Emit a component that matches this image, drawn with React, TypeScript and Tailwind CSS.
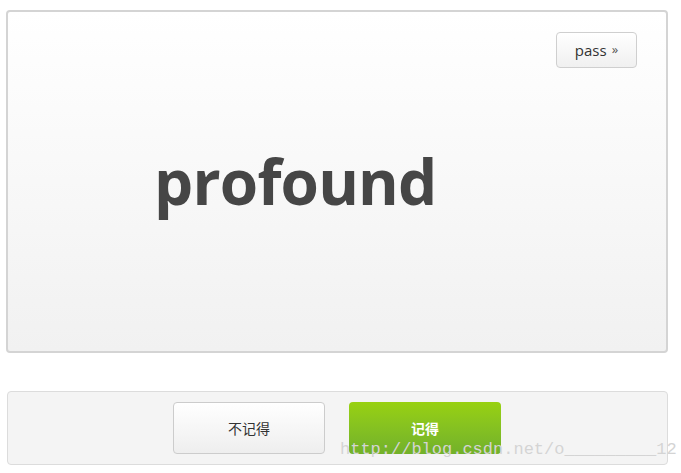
import React from 'react';

export default function App() {
  return (
    <div className="relative w-[681px] h-[473px] bg-white" style={{ fontFamily: '"Open Sans", "Noto Sans CJK SC", sans-serif' }}>
      <div className="pt-[10px] pl-[6px]">
        {/* word card */}
        <div className="w-[662px] h-[343px] rounded-[4px] border-2 border-[#d4d4d4] bg-gradient-to-b from-white to-[#f1f1f1] flex flex-col">
          <div className="flex justify-end pt-[20px] pr-[29px]">
            <button className="w-[81px] h-[36px] rounded-[4px] border border-[#cfcfcf] bg-gradient-to-b from-white to-[#f0f0f0] text-[15px] text-[#333] flex items-center justify-center gap-[5px]">
              pass <span className="text-[13px] text-[#555]">»</span>
            </button>
          </div>
          <div className="pl-[146px] pt-[82px]">
            <span className="text-[62px] font-bold text-[#464646] leading-none tracking-[-0.8px]">profound</span>
          </div>
        </div>

        {/* actions */}
        <div className="mt-[38px] ml-[1px] w-[661px] h-[74px] rounded-[4px] border border-[#dcdcdc] bg-[#f4f4f4] flex items-center pl-[165px] gap-[24px]">
          <button className="w-[152px] h-[52px] rounded-[4px] border border-[#cccccc] bg-gradient-to-b from-white to-[#eeeeee] text-[14px] text-[#333]">
            不记得
          </button>
          <button className="w-[152px] h-[52px] rounded-[4px] bg-gradient-to-b from-[#98d10f] to-[#72b12a] text-[14px] font-bold text-white">
            记得
          </button>
        </div>
      </div>

      {/* watermark */}
      <div
        className="absolute left-[340px] top-[441px] text-[17px] text-[#d4d4d4] leading-none whitespace-nowrap pointer-events-none"
        style={{ fontFamily: '"Liberation Mono", monospace' }}
      >
        http://blog.csdn.net/o_________12
      </div>
    </div>
  );
}
